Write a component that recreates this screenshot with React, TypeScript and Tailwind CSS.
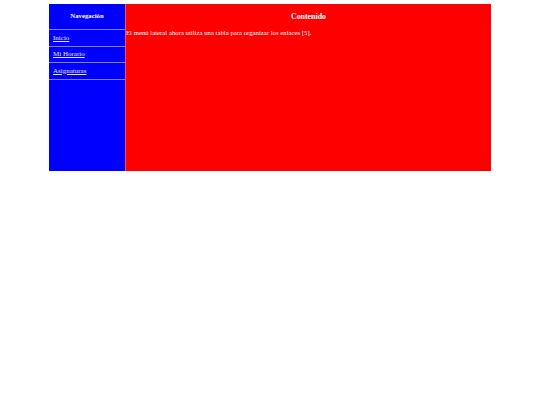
export default function App() {
  const links = ["Inicio", "Mi Horario", "Asignaturas"];
  return (
    <div className="w-[540px] h-[405px] bg-white pt-[3px] pl-[48px] font-['Liberation_Serif',serif]">
      <div className="flex w-[444px] h-[169px] border border-white/50">
        <aside className="w-[76px] bg-[#0000ff] flex flex-col">
          <div className="h-[25px] flex items-center justify-center text-[6.75px] font-bold text-white">
            Navegación
          </div>
          <ul className="border-t border-white/50">
            {links.map((l) => (
              <li key={l} className="h-[16.5px] border-b border-white/50 flex items-center pl-[4px]">
                <a href="#" className="text-[7px] text-[#e6e6ff] underline">
                  {l}
                </a>
              </li>
            ))}
          </ul>
        </aside>
        <main className="flex-1 bg-[#ff0000] text-white border-l border-white/30">
          <h3 className="h-[25px] flex items-center justify-center text-[7.9px] font-bold">Contenido</h3>
          <p className="text-[6.75px] leading-[8px]">
            El menú lateral ahora utiliza una tabla para organizar los enlaces [5].
          </p>
        </main>
      </div>
    </div>
  );
}
